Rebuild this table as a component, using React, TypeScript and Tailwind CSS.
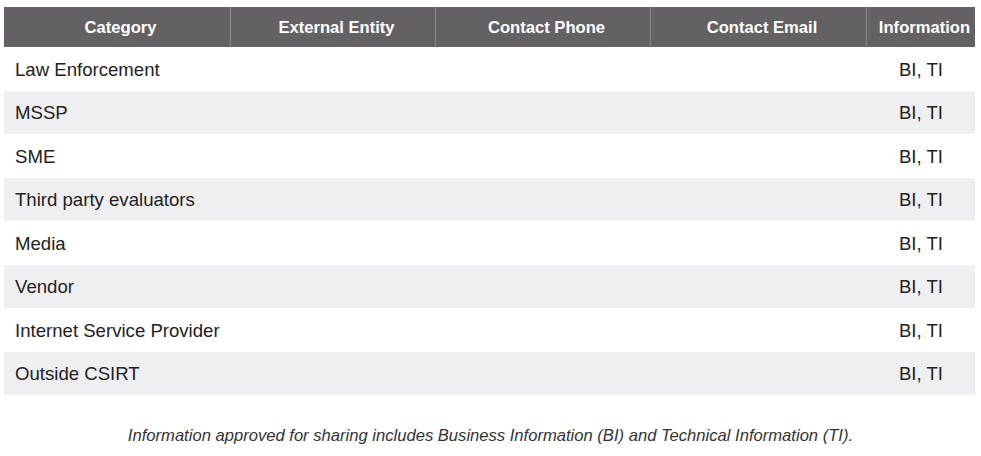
import React from "react";

const rows = [
  "Law Enforcement",
  "MSSP",
  "SME",
  "Third party evaluators",
  "Media",
  "Vendor",
  "Internet Service Provider",
  "Outside CSIRT",
];

const cols = [
  { label: "Category", w: "w-[226px]" },
  { label: "External Entity", w: "w-[205px]" },
  { label: "Contact Phone", w: "w-[215px]" },
  { label: "Contact Email", w: "w-[216px]" },
  { label: "Information", w: "flex-1" },
];

export default function App() {
  return (
    <div className="w-[981px] h-[456px] bg-white font-['Liberation_Sans',Arial,sans-serif] text-[#222]">
      <div className="pt-[7px] pl-[4px] w-[975px]">
        <div className="flex h-[40px] bg-[#646164] text-white font-bold text-[16.6px]">
          {cols.map((c, i) => (
            <div
              key={c.label}
              className={`${c.w} flex items-center justify-center pl-[7px] pt-[2px] ${i > 0 ? "border-l border-[#8a888a]" : ""}`}
            >
              {c.label}
            </div>
          ))}
        </div>
        {rows.map((r, i) => (
          <div
            key={r}
            className={`flex h-[43.5px] items-center pt-[2px] text-[18.6px] ${i % 2 === 1 ? "bg-[#efeef1]" : "bg-white"}`}
          >
            <div className="w-[862px] pl-[11px]">{r}</div>
            <div className="flex-1 text-center pl-[1px]">BI, TI</div>
          </div>
        ))}
      </div>
      <div className="mt-[29px] text-center italic text-[16.6px] text-[#333]">
        Information approved for sharing includes Business Information (BI) and Technical Information (TI).
      </div>
    </div>
  );
}
